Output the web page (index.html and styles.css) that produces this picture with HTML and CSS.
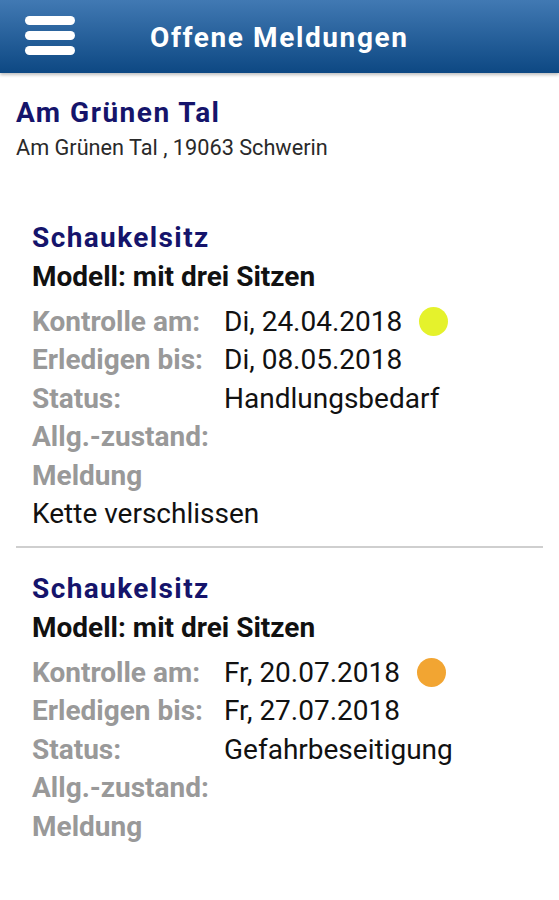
FILE: index.html
```html
<!DOCTYPE html>
<html lang="de">
<head>
  <meta charset="UTF-8">
  <title>Offene Meldungen</title>
  <meta name="viewport" content="width=device-width, initial-scale=1.0">
  <link rel="stylesheet" href="styles.css">
</head>
<body>
  <header class="topbar">
    <div class="menu">
      <span></span><span></span><span></span>
    </div>
    <h1>Offene Meldungen</h1>
  </header>

  <div class="place">
    <h2>Am Grünen Tal</h2>
    <p>Am Grünen Tal , 19063 Schwerin</p>
  </div>

  <div class="report">
    <h3>Schaukelsitz</h3>
    <div class="model">Modell: mit drei Sitzen</div>
    <div class="row"><span class="label">Kontrolle am:</span><span class="value">Di, 24.04.2018</span><span class="dot yellow"></span></div>
    <div class="row"><span class="label">Erledigen bis:</span><span class="value">Di, 08.05.2018</span></div>
    <div class="row"><span class="label">Status:</span><span class="value">Handlungsbedarf</span></div>
    <div class="row"><span class="label">Allg.-zustand:</span><span class="value"></span></div>
    <div class="row"><span class="label">Meldung</span></div>
    <div class="note">Kette verschlissen</div>
  </div>

  <hr class="divider">

  <div class="report">
    <h3>Schaukelsitz</h3>
    <div class="model">Modell: mit drei Sitzen</div>
    <div class="row"><span class="label">Kontrolle am:</span><span class="value">Fr, 20.07.2018</span><span class="dot orange"></span></div>
    <div class="row"><span class="label">Erledigen bis:</span><span class="value">Fr, 27.07.2018</span></div>
    <div class="row"><span class="label">Status:</span><span class="value">Gefahrbeseitigung</span></div>
    <div class="row"><span class="label">Allg.-zustand:</span><span class="value"></span></div>
    <div class="row"><span class="label">Meldung</span></div>
  </div>
</body>
</html>
```

FILE: styles.css
```css
body {
  margin: 0;
  font-family: Roboto, "Liberation Sans", sans-serif;
  background: white;
  color: #111;
}
.topbar {
  height: 73px;
  display: flex;
  align-items: center;
  background: linear-gradient(#4179b3, #0d4883);
  box-shadow: 0 2px 3px rgba(0,0,0,0.25);
}
.menu {
  width: 50px;
  margin: 0 0 2px 25px;
  display: flex;
  flex-direction: column;
  gap: 5.5px;
}
.menu span {
  height: 9.5px;
  border-radius: 5px;
  background: white;
}
.topbar h1 {
  margin: 2px 0 0 75px;
  color: white;
  font-size: 28px;
  letter-spacing: 1.6px;
  font-weight: bold;
}
.place {
  padding: 22px 16px 0;
}
.place h2 {
  margin: 0;
  color: #15146b;
  font-size: 28px;
  letter-spacing: 1.5px;
  font-weight: bold;
  line-height: 36px;
}
.place p {
  margin: 4px 0 0;
  font-size: 21.7px;
  line-height: 26px;
  color: #2a2a2a;
}
.report {
  padding: 0 32px;
}
.place + .report {
  margin-top: 57px;
}
.report h3 {
  margin: 0;
  color: #15146b;
  font-size: 28px;
  letter-spacing: 1.4px;
  line-height: 40px;
}
.model {
  font-size: 28px;
  font-weight: bold;
  line-height: 38px;
  margin-bottom: 6px;
}
.row {
  display: flex;
  align-items: center;
  height: 38.5px;
  font-size: 28px;
}
.label {
  width: 192px;
  color: #999;
  font-weight: bold;
}
.value {
  color: #111;
}
.dot {
  width: 29px;
  height: 29px;
  border-radius: 50%;
  margin-left: 17px;
}
.yellow {
  background: #e5f22c;
}
.orange {
  background: #f2a532;
}
.note {
  font-size: 28px;
  line-height: 38.5px;
}
.divider {
  margin: 13px 16px 21px;
  border: none;
  height: 2px;
  background: #cfcfcf;
}
```
